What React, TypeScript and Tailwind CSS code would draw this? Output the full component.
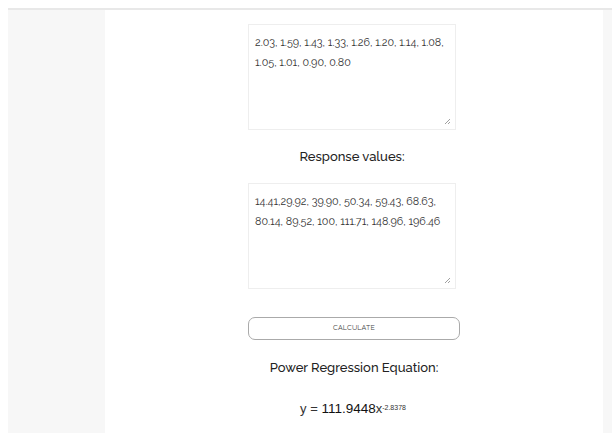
export default function App() {
  const font = { fontFamily: "Raleway, Lato, 'Open Sans', sans-serif" };
  return (
    <div className="w-[612px] h-[433px] bg-white overflow-hidden pt-2" style={font}>
      <div className="flex h-full ml-2 border-t-2 border-[#e8e8e8]">
        <div className="w-[97px] bg-[#f7f7f7]" />
        <div className="flex-1 pl-[143px] pt-[14px]">
          <div className="w-[208px] flex flex-col items-center">
            <div className="w-full h-[106px] border border-[#eeeeee] relative pl-[6px] pr-[4px] pt-[8px] text-[10.8px] leading-[20px] text-[#333]">
              2.03, 1.59, 1.43, 1.33, 1.26, 1.20, 1.14, 1.08, 1.05, 1.01, 0.90, 0.80
              <Grip />
            </div>
            <div className="mt-[18px] text-[13px] font-medium text-[#222] h-[18px] leading-[18px]">Response values:</div>
            <div className="mt-[17px] w-full h-[106px] border border-[#eeeeee] relative pl-[6px] pr-[4px] pt-[8px] text-[10.8px] leading-[20px] text-[#333]">
              14.41,29.92, 39.90, 50.34, 59.43, 68.63, 80.14, 89.52, 100, 111.71, 148.96, 196.46
              <Grip />
            </div>
            <button className="mt-[28px] w-[212px] ml-[4px] h-[23px] rounded-[7px] border border-[#aaaaaa] text-[7px] tracking-wide text-[#444] bg-white">
              CALCULATE
            </button>
            <div className="mt-[19px] text-[13px] font-medium text-[#222] h-[18px] leading-[18px] ml-[4px]">Power Regression Equation:</div>
            <div className="mt-[22px] text-[13px] text-[#333] ml-[2px]" style={{ fontFamily: "'Liberation Sans', Arial, sans-serif" }}>
              y = <span className="text-[13.5px] font-medium text-[#111]">111.9448</span>x
              <sup className="text-[7px] relative -top-[3px]">-2.8378</sup>
            </div>
          </div>
        </div>
        <div className="w-[9px] ml-auto bg-[#f7f7f7]" />
      </div>
    </div>
  );
}

function Grip() {
  return (
    <svg className="absolute right-[4px] bottom-[4px]" width="7" height="7" viewBox="0 0 7 7">
      <path d="M1 6 L6 1 M4 6 L6 4" stroke="#888" strokeWidth="0.8" />
    </svg>
  );
}
